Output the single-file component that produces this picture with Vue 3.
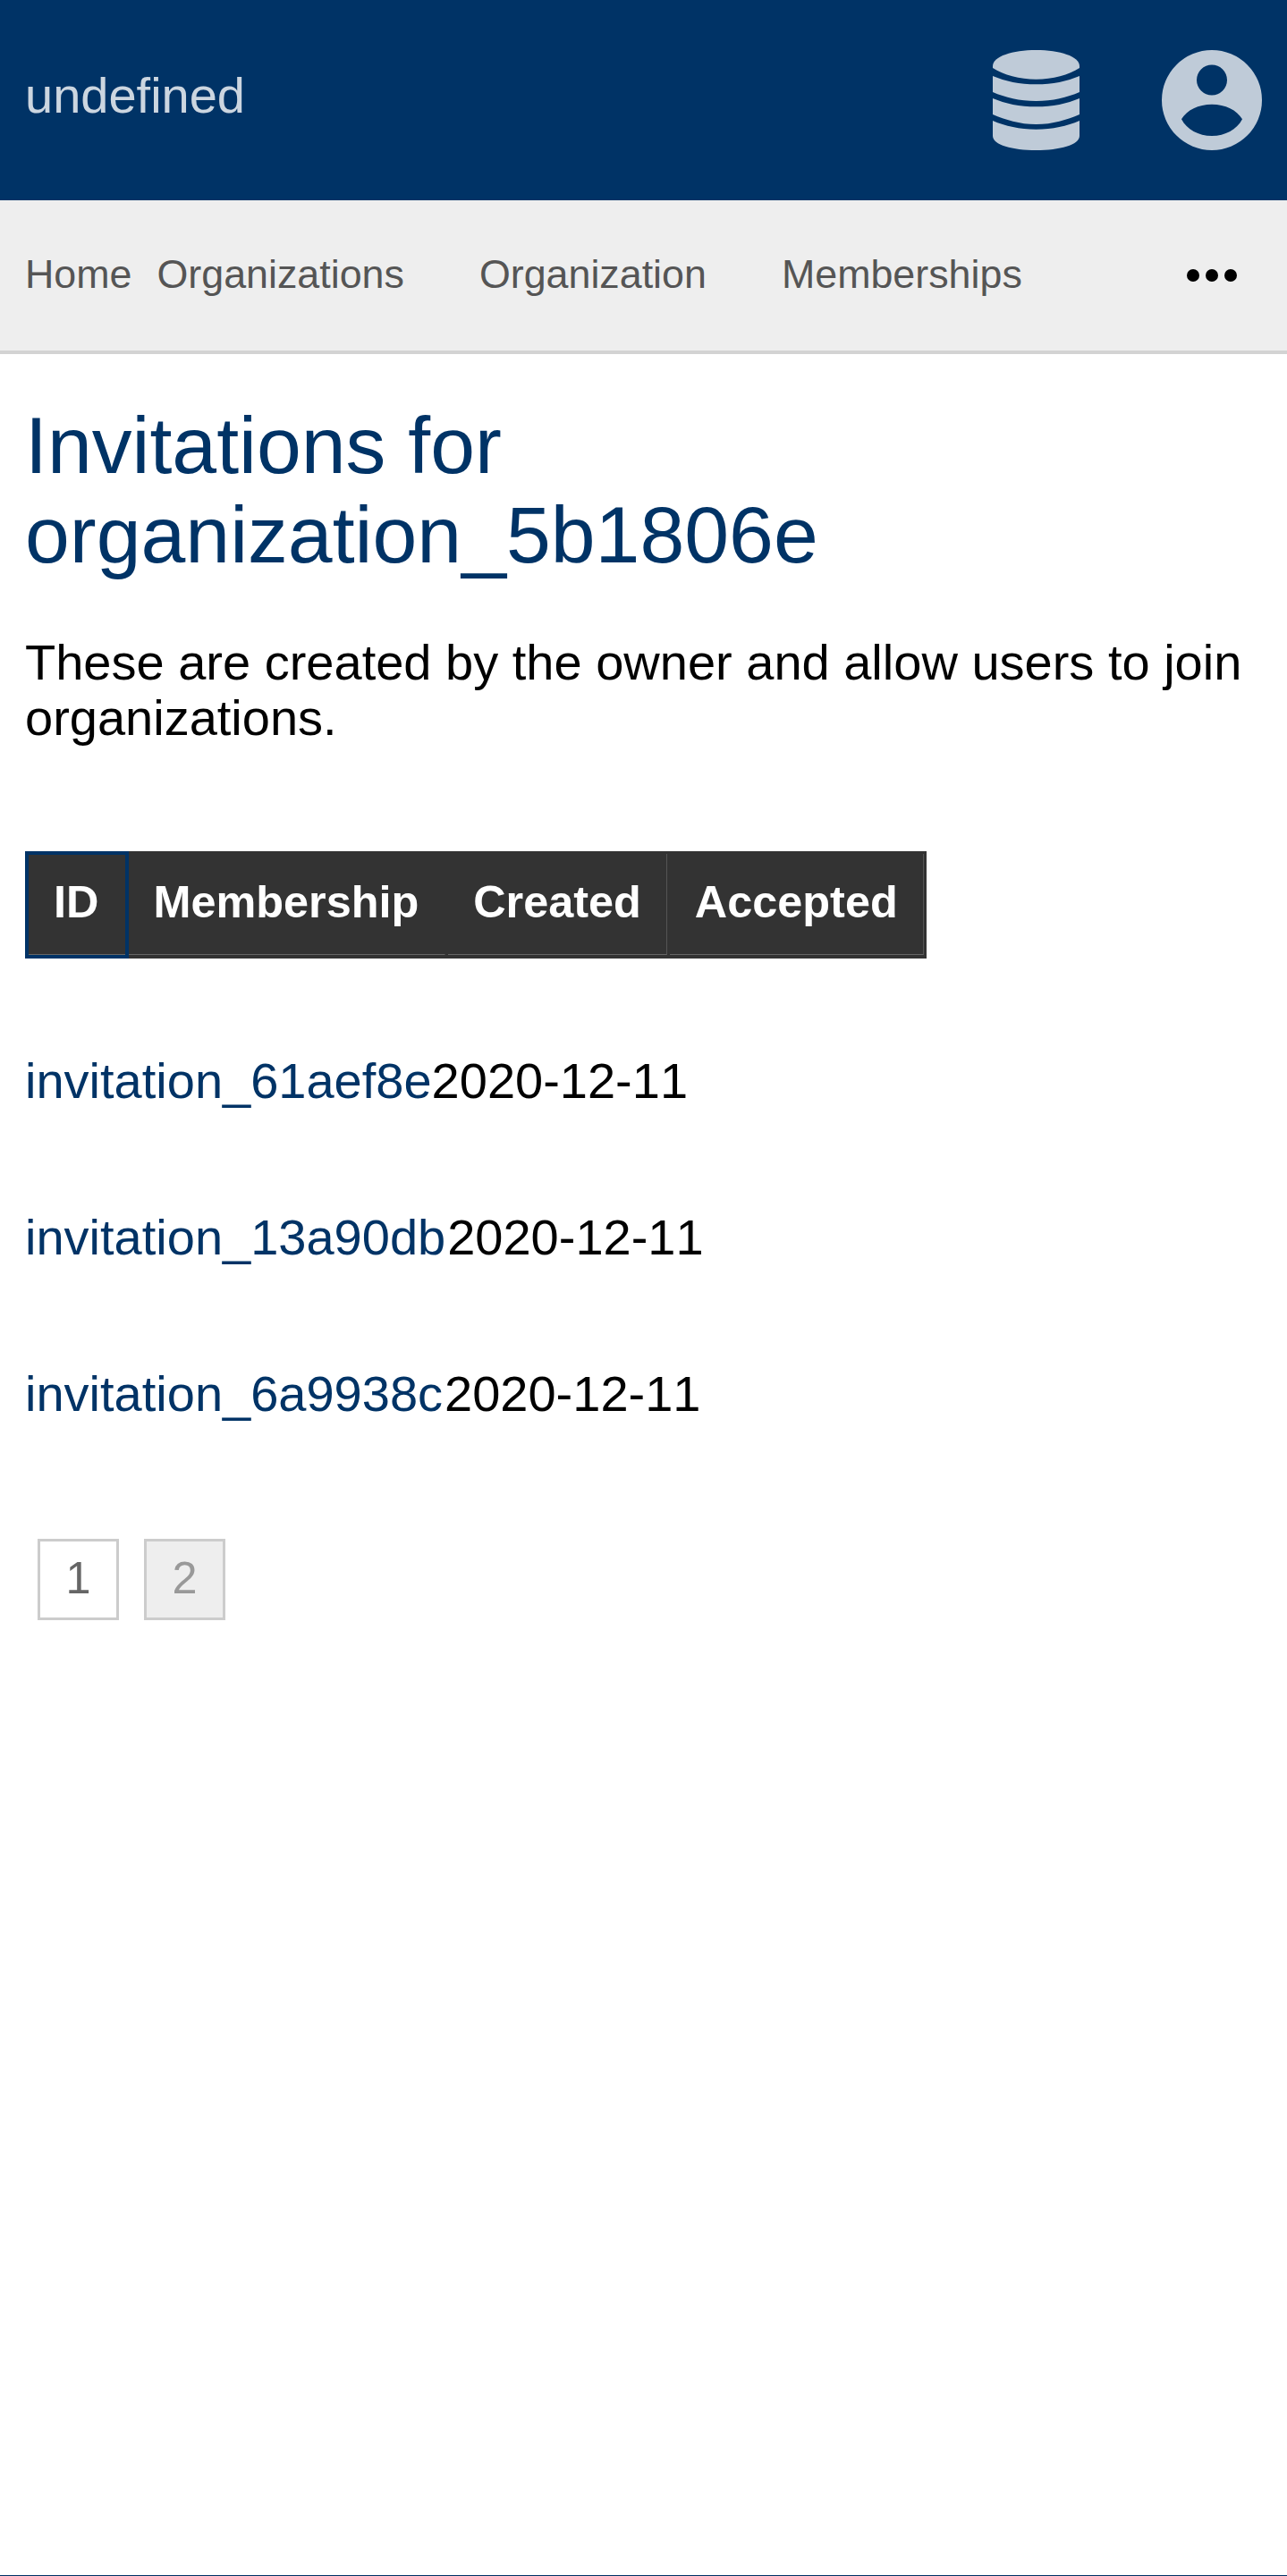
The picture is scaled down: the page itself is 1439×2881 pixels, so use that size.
<template>
  <div class="page">
    <header class="topbar">
      <a class="brand">undefined</a>
      <div class="topbar-icons">
        <svg class="icon-db" viewBox="0 0 97 112" width="97" height="112">
          <path d="M0 18C0 7 22 0 48.5 0C75 0 97 7 97 18V20C85 28 67 32.7 48.5 32.7C30 32.7 12 28 0 20Z" />
          <path d="M0 29C14 35 30 38.3 48.5 38.3C67 38.3 83 35 97 29V47C83 53 67 57 48.5 57C30 57 14 53 0 47Z" />
          <path d="M0 54C14 60 30 63.3 48.5 63.3C67 63.3 83 60 97 54V72C83 78 67 83 48.5 83C30 83 14 78 0 72Z" />
          <path d="M0 79C14 85 30 88.7 48.5 88.7C67 88.7 83 85 97 79V96C97 106 75 112 48.5 112C22 112 0 106 0 96Z" />
        </svg>
        <svg class="icon-user" viewBox="0 0 112 112" width="112" height="112">
          <path
            fill-rule="evenodd"
            d="M56 0A56 56 0 1 1 56 112A56 56 0 1 1 56 0ZM56 16.5A17 17 0 1 0 56 50.5A17 17 0 1 0 56 16.5ZM22 77.3C28 67 41 60.7 56 60.7C71 60.7 84 67 90 77.3C84 89 71 96 56 96C41 96 28 89 22 77.3Z"
          />
        </svg>
      </div>
    </header>

    <nav class="navbar">
      <a
        v-for="item in navItems"
        :key="item.label"
        :class="['nav-link', { spaced: item.spaced }]"
      >
        {{ item.label }}
      </a>
      <svg class="more" viewBox="0 0 56 14" width="56" height="14">
        <circle cx="7" cy="7" r="7" />
        <circle cx="28" cy="7" r="7" />
        <circle cx="49" cy="7" r="7" />
      </svg>
    </nav>

    <main class="content">
      <h1>Invitations for organization_5b1806e</h1>
      <p class="intro">These are created by the owner and allow users to join organizations.</p>

      <div class="table-head">
        <div
          v-for="col in columns"
          :key="col.label"
          :class="['th', col.cls]"
        >
          <div class="th-inner">{{ col.label }}</div>
        </div>
      </div>

      <div class="rows">
        <div v-for="row in rows" :key="row.id" class="row">
          <a class="row-link">{{ row.id }}</a>
          <span>{{ row.created }}</span>
        </div>
      </div>

      <div class="pager">
        <a class="page-btn">1</a>
        <a class="page-btn current">2</a>
      </div>
    </main>

    <div class="bottom-line"></div>
  </div>
</template>

<script setup>
const navItems = [
  { label: 'Home' },
  { label: 'Organizations' },
  { label: 'Organization', spaced: true },
  { label: 'Memberships', spaced: true }
]

const columns = [
  { label: 'ID', cls: 'focused' },
  { label: 'Membership', cls: 'plain' },
  { label: 'Created' },
  { label: 'Accepted' }
]

const rows = [
  { id: 'invitation_61aef8e', created: '2020-12-11' },
  { id: 'invitation_13a90db', created: '2020-12-11' },
  { id: 'invitation_6a9938c', created: '2020-12-11' }
]
</script>

<style>
html,
body {
  margin: 0;
  background: #fff;
}
</style>

<style scoped>
.page {
  min-height: 2881px;
  display: flex;
  flex-direction: column;
  font-family: "Liberation Sans", Arial, sans-serif;
  font-size: 56px;
  color: #000;
}

.topbar {
  height: 224px;
  flex-shrink: 0;
  background: #036;
  display: flex;
  align-items: center;
  justify-content: space-between;
  padding: 0 28px;
}

.brand {
  color: rgba(255, 255, 255, 0.8);
  line-height: 64px;
  margin-top: -11px;
}

.topbar-icons {
  display: flex;
  align-items: center;
  gap: 92px;
}

.topbar-icons svg {
  display: block;
  fill: rgba(255, 255, 255, 0.75);
}

.navbar {
  height: 168px;
  flex-shrink: 0;
  background: #eee;
  border-bottom: 4px solid #d3d3d3;
  display: flex;
  align-items: center;
  gap: 28px;
  padding: 0 56px 0 28px;
  font-size: 44.8px;
  color: #555;
}

.nav-link {
  margin-top: -3px;
}

.nav-link.spaced {
  margin-left: 56px;
}

.more {
  margin-left: auto;
  display: block;
  fill: #000;
}

.content {
  padding: 0 28px;
}

h1 {
  margin: 52px 0 62px;
  font-size: 89.6px;
  line-height: 100px;
  font-weight: 400;
  color: #036;
}

.intro {
  margin: 0 0 119px;
  line-height: 61.6px;
}

.table-head {
  display: inline-flex;
  vertical-align: top;
  background: #333;
  color: #fff;
  font-size: 50.4px;
  font-weight: 700;
  line-height: 58px;
}

.th {
  border: solid #333;
  border-width: 3px 3px 3px 0;
}

.th-inner {
  padding: 25px 28px 29px;
  border-right: 1px solid #555;
  border-bottom: 1px solid #666;
}

.th.focused {
  border: 4px solid #036;
}

.th.focused .th-inner {
  padding-top: 24px;
  padding-right: 30px;
  border-right: 0;
}

.th.plain .th-inner {
  padding-left: 27px;
  padding-right: 29px;
  border-right-color: #333;
}

.rows {
  margin-top: 49px;
}

.row {
  height: 175px;
  display: flex;
  align-items: center;
  font-kerning: none;
}

.row-link {
  color: #036;
}

.row + .row .row-link {
  margin-right: 2px;
}

.pager {
  display: flex;
  gap: 28px;
  margin: 75px 0 0 14px;
}

.page-btn {
  width: 91px;
  height: 91px;
  box-sizing: border-box;
  border: 3px solid #ccc;
  padding-bottom: 5px;
  display: flex;
  align-items: center;
  justify-content: center;
  font-size: 50.4px;
  color: #666;
}

.page-btn.current {
  background: #eee;
  color: #999;
}

.bottom-line {
  margin-top: auto;
  height: 1px;
  background: #036;
}
</style>
